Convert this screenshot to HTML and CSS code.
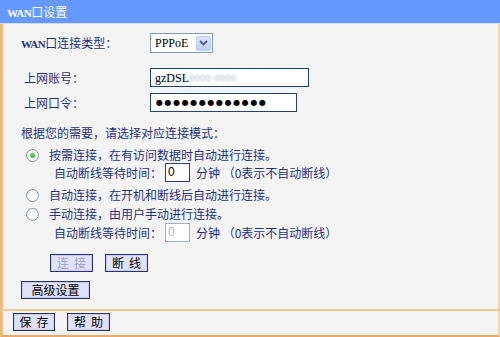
FILE: index.html
```html
<!DOCTYPE html>
<html lang="zh-CN">
<head>
<meta charset="utf-8">
<title>WAN口设置</title>
<link rel="stylesheet" href="styles.css">
</head>
<body>
<div class="panel">
  <div class="title"><span class="lat">WAN</span>口设置</div>
  <div class="body">
    <div class="row r1">
      <span class="label"><span class="lat-b">WAN</span>口连接类型：</span>
      <div class="select">
        <span class="sel-text">PPPoE</span>
        <span class="sel-btn"><svg width="9" height="6" viewBox="0 0 9 6"><path d="M1 1 L4.5 4.5 L8 1" fill="none" stroke="#4a5f8c" stroke-width="1.8"/></svg></span>
      </div>
    </div>
    <div class="row r2">
      <span class="label ind">上网账号：</span>
      <div class="field user"><span class="lat-in">gzDSL</span><span class="blur">0000-0000</span></div>
    </div>
    <div class="row r3">
      <span class="label ind">上网口令：</span>
      <div class="field pass">●●●●●●●●●●●●●</div>
    </div>
    <div class="row heading">根据您的需要，请选择对应连接模式：</div>
    <div class="row opt o1"><span class="radio checked"></span><span>按需连接，在有访问数据时自动进行连接。</span></div>
    <div class="row wait"><span>自动断线等待时间：</span><span class="num">0</span><span class="unit">分钟 （0表示不自动断线）</span></div>
    <div class="row opt o2"><span class="radio"></span><span>自动连接，在开机和断线后自动进行连接。</span></div>
    <div class="row opt o3"><span class="radio"></span><span>手动连接，由用户手动进行连接。</span></div>
    <div class="row wait w2"><span>自动断线等待时间：</span><span class="num disabled">0</span><span class="unit">分钟 （0表示不自动断线）</span></div>
    <div class="row btns"><span class="btn spaced off">连接</span><span class="btn spaced">断线</span></div>
    <div class="row adv"><span class="btn wide">高级设置</span></div>
  </div>
  <div class="sep"></div>
  <div class="footer"><span class="btn spaced f1">保存</span><span class="btn spaced">帮助</span></div>
</div>
</body>
</html>
```
FILE: styles.css
```css
html, body {
  margin: 0;
  padding: 0;
}
body {
  width: 500px;
  height: 337px;
  background: #f4f4f4;
  font-family: "Noto Sans CJK SC", sans-serif;
  font-size: 12px;
  color: #1e3385;
  overflow: hidden;
}
.panel {
  width: 500px;
  height: 337px;
  display: flex;
  flex-direction: column;
}
.title {
  height: 23px;
  line-height: 23px;
  background: #6699ff;
  color: #fff;
  padding-left: 7px;
  border-bottom: 1px solid #d6ddf2;
  font-size: 12px;
}
.lat {
  font-family: "Liberation Serif", serif;
  font-weight: bold;
  font-size: 11px;
  letter-spacing: -0.5px;
}
.lat-b {
  font-family: "Liberation Serif", serif;
  font-weight: bold;
  font-size: 11px;
  letter-spacing: -0.5px;
}
.body {
  flex: 1;
  border-left: 3px solid #eeb97a;
  border-right: 2px solid #f2d4ae;
  padding-left: 18px;
  display: flex;
  flex-direction: column;
}
.row {
  display: flex;
  align-items: center;
  line-height: 16px;
  white-space: nowrap;
}
.label {
  width: 129px;
  flex: none;
}
.label.ind {
  margin-left: 3px;
  width: 126px;
}
.r1 { margin-top: 9px; height: 20px; }
.r2 { margin-top: 15px; height: 19px; }
.r3 { margin-top: 6px; height: 19px; }
.heading { margin-top: 13px; height: 16px; }
.o1 { margin-top: 6px; height: 16px; }
.wait { height: 19px; padding-left: 33px; }
.o2 { margin-top: 5px; height: 16px; }
.o3 { margin-top: 3px; height: 16px; }
.w2 { margin-top: 1px; }
.btns { margin-top: 12px; padding-left: 29px; gap: 12px; }
.adv { margin-top: 9px; }

.select {
  width: 61px;
  height: 18px;
  border: 1px solid #7f9db9;
  background: #fff;
  display: flex;
  align-items: center;
  justify-content: space-between;
}
.sel-text {
  padding-left: 4px;
  font-family: "Liberation Serif", serif;
  font-size: 12px;
  color: #000;
}
.sel-btn {
  width: 15px;
  height: 15px;
  margin-right: 1px;
  border: 1px solid #bccbef;
  border-radius: 2px;
  background: linear-gradient(#dbe5fd, #bdd0f9);
  display: flex;
  align-items: center;
  justify-content: center;
  box-sizing: border-box;
}
.field {
  height: 17px;
  border: 1px solid #23407e;
  background: #fff;
  display: flex;
  align-items: center;
  padding-left: 4px;
  box-sizing: content-box;
  color: #000;
}
.user { width: 153px; }
.pass {
  width: 140px;
  font-family: "DejaVu Sans", sans-serif;
  font-size: 8px;
  letter-spacing: 1.6px;
  padding-left: 5px;
}
.lat-in {
  font-family: "Liberation Serif", serif;
  font-size: 12px;
}
.blur {
  font-family: "Liberation Sans", sans-serif;
  font-size: 9px;
  color: #aeb2c0;
  filter: blur(1px);
  letter-spacing: 0.5px;
}
.radio {
  width: 11px;
  height: 11px;
  border: 1px solid #8898a8;
  border-radius: 50%;
  background: radial-gradient(circle at 60% 60%, #ffffff 30%, #e4e8ee 100%);
  margin-left: 5px;
  margin-right: 10px;
  flex: none;
  position: relative;
}
.radio.checked::after {
  content: "";
  position: absolute;
  left: 3px;
  top: 3px;
  width: 5px;
  height: 5px;
  border-radius: 50%;
  background: radial-gradient(circle at 40% 40%, #6fd46f, #21a121);
}
.num {
  width: 21px;
  height: 17px;
  border: 1px solid #23407e;
  background: #fff;
  margin-left: 3px;
  margin-right: 6px;
  padding-left: 2px;
  font-family: "Liberation Sans", sans-serif;
  font-size: 12px;
  line-height: 17px;
  color: #000;
}
.num.disabled {
  border-color: #9eb0d6;
  color: #b4b4b4;
}
.btn {
  display: inline-flex;
  align-items: center;
  justify-content: center;
  width: 41px;
  height: 16px;
  border: 1px solid #2c3366;
  box-shadow: inset 0 0 0 1px #c9cbf2;
  background: #e0e2fc;
  color: #000;
  font-size: 12px;
  line-height: 16px;
  flex: none;
  box-sizing: content-box;
  white-space: nowrap;
}
.btn.spaced {
  letter-spacing: 5px;
  text-indent: 5px;
}
.btn.off { color: #a0a2c8; }
.btn.wide { width: 67px; }
.sep {
  height: 2px;
  background: #f0c891;
}
.footer {
  border-left: 3px solid #eeb97a;
  border-right: 2px solid #f2d4ae;
  border-bottom: 2px solid #e8a867;
  display: flex;
  align-items: flex-start;
  padding-top: 2px;
  padding-left: 10px;
  gap: 12px;
  box-sizing: border-box;
  height: 26px;
}
.btn.f1 { width: 40px; }
```
